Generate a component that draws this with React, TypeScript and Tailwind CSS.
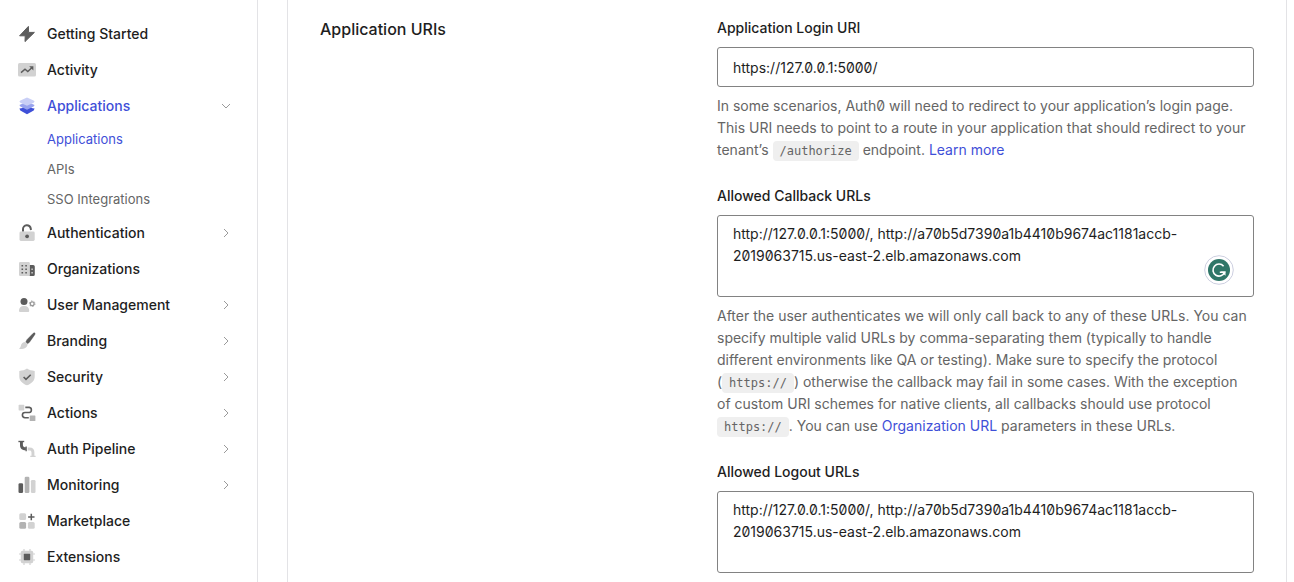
import type { ReactNode } from "react";

const DARK = "#5c5c5c";
const MID = "#b3b3b3";
const LIGHT = "#d2d2d2";

function Icon({ children }: { children: ReactNode }) {
  return (
    <svg viewBox="0 0 18 18" className="size-[18px] shrink-0" fill="none" aria-hidden="true">
      {children}
    </svg>
  );
}

const icons = {
  bolt: (
    <Icon>
      <path d="M10.4 1.4 1.6 10.8h5.6l-.2 5.8 9.4-9.2h-5.8z" fill={DARK} stroke={DARK} strokeWidth="1" strokeLinejoin="round" />
    </Icon>
  ),
  activity: (
    <Icon>
      <rect x="0" y="2" width="18" height="13.6" rx="1.6" fill={LIGHT} />
      <path d="M3 11.6 7 8.2l2.8 2.3 4-3.8" stroke={DARK} strokeWidth="1.4" />
      <path d="M11.2 5.2h4.2v4.2z" fill={DARK} />
    </Icon>
  ),
  layers: (
    <Icon>
      <path d="M9 8.6 14.6 11.2l2 .4-.9 2L9 17.2l-6.7-3.6-.9-2 2-.4z" fill="#3f50d8" />
      <path d="M9 4.8 16.6 8l-1 1.6L9 12.8 2.4 9.6 1.4 8z" fill="#98a3ee" />
      <path d="m9 .6 6.6 2.8 1 1-1 1.4L9 8.8 2.4 5.8l-1-1.4 1-1z" fill="#c9cff6" />
    </Icon>
  ),
  lock: (
    <Icon>
      <path d="M5 7.8V5.4a3.9 3.9 0 0 1 7.8-.6l.2 1.2" stroke={DARK} strokeWidth="2" />
      <rect x="1.5" y="7.6" width="15.2" height="9.4" rx="1.4" fill={LIGHT} />
      <circle cx="9.1" cy="12.3" r="1.9" fill={DARK} />
    </Icon>
  ),
  building: (
    <Icon>
      <path d="M11.4 5h3.8a1.6 1.6 0 0 1 1.6 1.6v7.8a1.6 1.6 0 0 1-1.6 1.6h-3.8z" fill={DARK} />
      <rect x="1" y="2" width="10.8" height="14" rx="1.2" fill={LIGHT} />
      <path d="M3.5 5h1.6v1.6H3.5zM7.3 5h1.6v1.6H7.3zM3.5 8.5h1.6v1.6H3.5zM7.3 8.5h1.6v1.6H7.3zM3.5 12h1.6v1.6H3.5zM7.3 12h1.6v1.6H7.3z" fill={DARK} />
      <path d="M13.4 8.5h1.4v1.5h-1.4zM13.4 12h1.4v1.5h-1.4z" fill={LIGHT} />
    </Icon>
  ),
  users: (
    <Icon>
      <circle cx="6" cy="5.4" r="3.5" fill={DARK} />
      <path d="M1 14.4a4.4 4.4 0 0 1 4.4-4.4h1.4a4.4 4.4 0 0 1 4.4 4.4v.6a1 1 0 0 1-1 1H2a1 1 0 0 1-1-1z" fill={LIGHT} />
      <circle cx="14.2" cy="7.7" r="1.9" stroke="#999" strokeWidth="1.3" />
      <circle cx="14.2" cy="7.7" r="2.8" stroke="#999" strokeWidth="1" strokeDasharray="1.2 1.73" />
    </Icon>
  ),
  brush: (
    <Icon>
      <path d="M16.9 1c.4.5.2 1.2-.1 1.7l-5.3 7.5-1.9 1.5-1.8-1.8 1.1-2.200 6-6.100c.5-.5 1.500-1 2-.6z" fill={DARK} stroke={DARK} strokeWidth=".4" />
      <path d="M7.400 10.100 9.500 12.100c.2 2.900-2.400 4.900-5.400 4.900-1.200 0-2.300-.1-3.200-.5 1.200-.5 1.600-1.200 1.900-2.400.5-2.500 2.200-4 4.600-4z" fill={LIGHT} />
    </Icon>
  ),
  shield: (
    <Icon>
      <path d="M9 .6c2.200 1.400 4.700 2.200 7.700 2.300v5.500c0 4.200-3 7-7.700 8.900-4.700-1.900-7.700-4.700-7.700-8.900V2.900C4.300 2.800 6.800 2 9 .6z" fill={LIGHT} />
      <path d="m5.600 9 2.400 2.300 4.700-4.600" stroke={DARK} strokeWidth="1.600" />
    </Icon>
  ),
  actions: (
    <Icon>
      <path d="M7.300 3.400h4a2.600 2.600 0 0 1 0 5.100H7a2.600 2.600 0 0 0 0 5.200h3.800" stroke={DARK} strokeWidth="1.600" />
      <rect x=".6" y=".8" width="5.700" height="5.600" rx=".6" fill={LIGHT} />
      <rect x="11.700" y="11.400" width="5.700" height="5.600" rx=".6" fill={MID} />
    </Icon>
  ),
  pipeline: (
    <Icon>
      <path d="M.4 1.500h5.800" stroke={DARK} strokeWidth="1.400" />
      <path d="M2 2h2.900v3c0 1.600 1 2.300 3 2.300v3C4 10.300 2 8.400 2 5z" fill={DARK} />
      <path d="M7.500 6.400h1.300v4.800H7.500z" fill={DARK} />
      <path d="M9.700 7.400h1.800c3.200 0 4.900 1.700 4.900 4.900v3.400h1.200V17h-5.300v-1.300h1.200v-3c0-1.700-.7-2.300-2.300-2.300H9.700z" fill={LIGHT} />
    </Icon>
  ),
  bars: (
    <Icon>
      <rect x=".5" y="7.300" width="4.600" height="9.700" rx="1.300" fill={DARK} />
      <rect x="6.700" y=".7" width="4.700" height="16.300" rx="1.300" fill={MID} />
      <rect x="12.900" y="4" width="4.600" height="13" rx="1.300" fill={LIGHT} />
    </Icon>
  ),
  market: (
    <Icon>
      <rect x="1.300" y="1.300" width="6.800" height="6.800" rx="1.500" fill={LIGHT} />
      <rect x="1.300" y="9.900" width="6.800" height="6.800" rx="1.500" fill={MID} />
      <rect x="9.900" y="9.900" width="6.800" height="6.800" rx="1.500" fill={LIGHT} />
      <path d="M13.300 1.800v6.400M10.100 5h6.400" stroke={DARK} strokeWidth="1.500" />
    </Icon>
  ),
  chip: (
    <Icon>
      <path d="M6 1v16M12 1v16M1 6h16M1 12h16" stroke={LIGHT} strokeWidth="1.200" />
      <rect x="2.800" y="2.800" width="12.400" height="12.400" rx="1.600" fill={LIGHT} />
      <rect x="5.800" y="5.800" width="6.400" height="6.400" rx=".6" fill={DARK} />
    </Icon>
  ),
};

function Chevron({ open }: { open?: boolean }) {
  return (
    <svg viewBox="0 0 10 10" className="size-[10px] shrink-0" fill="none" stroke="#9a9a9a" aria-hidden="true">
      <path d={open ? "M1 3l4 4 4-4" : "M3 1l4 4-4 4"} />
    </svg>
  );
}

type Item = { label: string; icon: ReactNode; more?: boolean; children?: string[] };

const items: Item[] = [
  { label: "Getting Started", icon: icons.bolt },
  { label: "Activity", icon: icons.activity },
  { label: "Applications", icon: icons.layers, more: true, children: ["Applications", "APIs", "SSO Integrations"] },
  { label: "Authentication", icon: icons.lock, more: true },
  { label: "Organizations", icon: icons.building },
  { label: "User Management", icon: icons.users, more: true },
  { label: "Branding", icon: icons.brush, more: true },
  { label: "Security", icon: icons.shield, more: true },
  { label: "Actions", icon: icons.actions, more: true },
  { label: "Auth Pipeline", icon: icons.pipeline, more: true },
  { label: "Monitoring", icon: icons.bars, more: true },
  { label: "Marketplace", icon: icons.market },
  { label: "Extensions", icon: icons.chip },
];

function Sidebar() {
  return (
    <nav className="w-[258px] shrink-0 border-r border-[#e3e3e6] pt-4">
      <ul>
        {items.map((item) => (
          <li key={item.label}>
            <a
              href="#"
              className={`flex h-9 items-center gap-[11px] pr-[26px] pl-[18px] text-sm font-medium ${item.children ? "text-[#3f50d8]" : "text-[#1e1e1e]"}`}
            >
              {item.icon}
              <span className="flex-1">{item.label}</span>
              {item.more && <Chevron open={!!item.children} />}
            </a>
            {item.children && (
              <ul className="pt-px pl-[47px]">
                {item.children.map((child, i) => (
                  <li key={child}>
                    <a
                      href="#"
                      className={`flex h-[30px] items-center text-[13px] ${i === 0 ? "text-[#3f50d8]" : "text-[#656565]"}`}
                    >
                      {child}
                    </a>
                  </li>
                ))}
              </ul>
            )}
          </li>
        ))}
      </ul>
    </nav>
  );
}

function Code({ children }: { children: ReactNode }) {
  return (
    <code className="rounded bg-[#efefef] px-[7px] py-[3px] font-['DejaVu_Sans_Mono',monospace] text-xs text-[#656565]">
      {children}
    </code>
  );
}

function Field({ id, label, help, children }: { id: string; label: string; help?: ReactNode; children: ReactNode }) {
  return (
    <div className="flex flex-col gap-2">
      <label htmlFor={id} className="text-sm/[22px] font-medium text-[#1e1e1e]">
        {label}
      </label>
      {children}
      {help && <p className="text-sm/[22px] text-[#656565]">{help}</p>}
    </div>
  );
}

const urls = "http://127.0.0.1:5000/, http://a70b5d7390a1b4410b9674ac1181accb-2019063715.us-east-2.elb.amazonaws.com";
const control = "block w-full rounded-[3px] border border-[#828282] bg-white px-[15px] text-sm/[22px] text-[#1e1e1e]";

export default function App() {
  return (
    <div className="flex min-h-screen bg-white font-['Inter',sans-serif] [font-feature-settings:'zero']">
      <Sidebar />
      <main className="flex flex-1 pr-[7px] pl-[29px]">
        <section className="grid flex-1 grid-cols-[397fr_537fr] border-x border-[#e3e3e6] px-8 pt-[17px] pb-2">
          <h2 className="text-base/6 font-medium text-[#1e1e1e]">Application URIs</h2>
          <div className="flex flex-col gap-6">
            <Field
              id="login"
              label="Application Login URI"
              help={
                <>
                  In some scenarios, Auth0 will need to redirect to your application’s login page. This URI needs to
                  point to a route in your application that should redirect to your tenant’s <Code>/authorize</Code>{" "}
                  endpoint.{" "}
                  <a href="#" className="text-[#3f50d8]">
                    Learn more
                  </a>
                </>
              }
            >
              <input id="login" type="text" defaultValue="https://127.0.0.1:5000/" className={`${control} h-10`} />
            </Field>
            <Field
              id="callback"
              label="Allowed Callback URLs"
              help={
                <>
                  After the user authenticates we will only call back to any of these URLs. You can specify multiple
                  valid URLs by comma-separating them (typically to handle different environments like QA or testing).
                  Make sure to specify the protocol (<Code>https://</Code>) otherwise the callback may fail in some
                  cases. With the exception of custom URI schemes for native clients, all callbacks should use protocol{" "}
                  <Code>https://</Code>. You can use{" "}
                  <a href="#" className="text-[#3f50d8]">
                    Organization URL
                  </a>{" "}
                  parameters in these URLs.
                </>
              }
            >
              <div className="relative">
                <textarea id="callback" defaultValue={urls} className={`${control} h-[82px] resize-none py-[7px]`} />
                <svg viewBox="0 0 30 30" className="absolute right-5 bottom-3 size-[30px]" fill="none" aria-hidden="true">
                  <circle cx="15" cy="15" r="14.300" fill="#fff" stroke="#cdcfe0" />
                  <circle cx="15" cy="15" r="11" fill="#2f7668" />
                  <path d="M19.600 11.200A6 6 0 1 0 20.600 17.200h-4.800" stroke="#fff" strokeWidth="1.600" />
                  <path d="M16.800 16.400h4.700v4.300z" fill="#fff" />
                </svg>
              </div>
            </Field>
            <Field id="logout" label="Allowed Logout URLs">
              <textarea id="logout" defaultValue={urls} className={`${control} h-[82px] resize-none py-[7px]`} />
            </Field>
          </div>
        </section>
      </main>
    </div>
  );
}
